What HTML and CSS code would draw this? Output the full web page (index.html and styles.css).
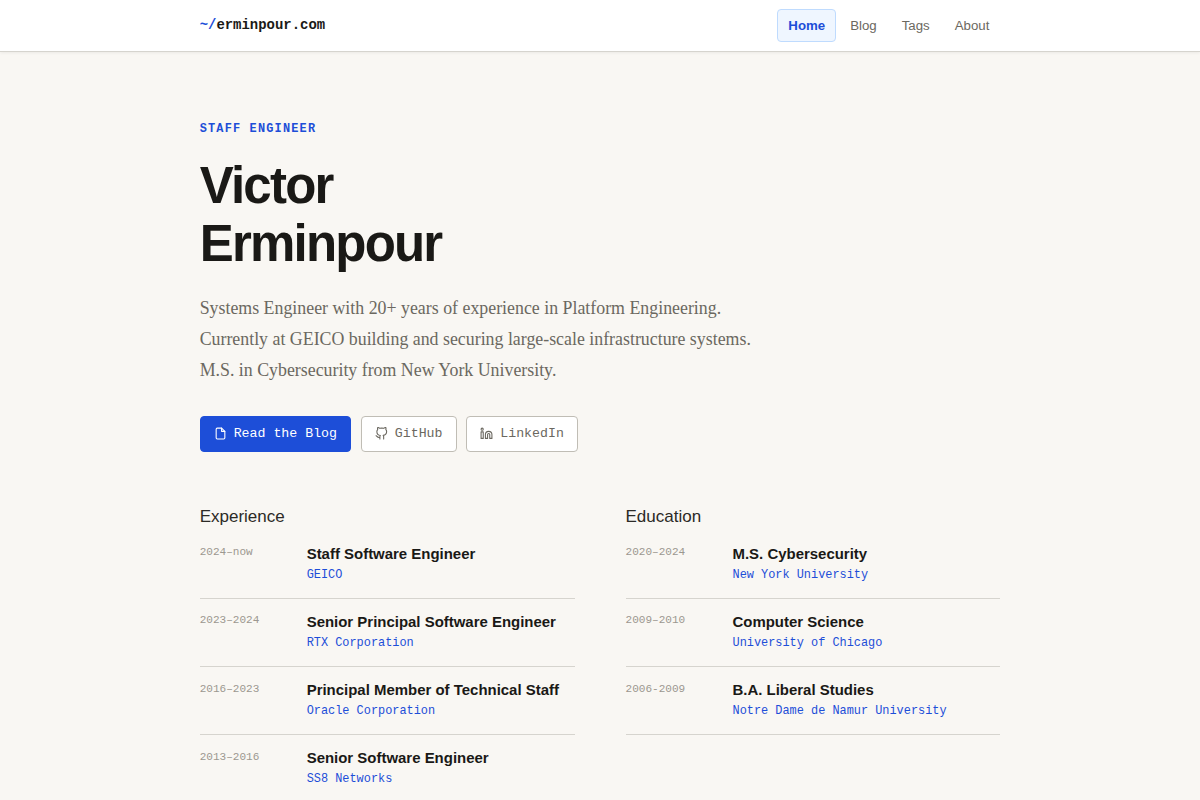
FILE: index.html
```html
<!DOCTYPE html>
<html lang="en">
<head>
  <meta charset="UTF-8" />
  <meta name="viewport" content="width=device-width, initial-scale=1.0"/>
  <title>Victor Erminpour</title>
  <link rel="stylesheet" href="styles.css">
</head>
<body>
  <header class="site-header">
    <div class="container header-inner">
      <a class="logo" href="#"><span class="logo-prefix">~/</span>erminpour.com</a>
      <nav class="nav">
        <a class="nav-link active" href="#">Home</a>
        <a class="nav-link" href="#">Blog</a>
        <a class="nav-link" href="#">Tags</a>
        <a class="nav-link" href="#">About</a>
      </nav>
    </div>
  </header>

  <main class="container">
    <section class="hero">
      <p class="eyebrow">Staff Engineer</p>
      <h1>Victor<br>Erminpour</h1>
      <p class="lead">Systems Engineer with 20+ years of experience in Platform Engineering. Currently at GEICO building and securing large-scale infrastructure systems. M.S. in Cybersecurity from New York University.</p>
      <div class="actions">
        <a class="btn btn-primary" href="#">
          <svg class="icon" viewBox="0 0 24 24"><path d="M14 2H6a2 2 0 0 0-2 2v16a2 2 0 0 0 2 2h12a2 2 0 0 0 2-2V8z"/><polyline points="14 2 14 8 20 8"/></svg>
          Read the Blog
        </a>
        <a class="btn" href="#">
          <svg class="icon" viewBox="0 0 24 24"><path d="M9 19c-5 1.5-5-2.5-7-3m14 6v-3.87a3.37 3.37 0 0 0-.94-2.61c3.14-.35 6.44-1.54 6.44-7A5.44 5.44 0 0 0 20 4.77 5.07 5.07 0 0 0 19.91 1S18.73.65 16 2.48a13.38 13.38 0 0 0-7 0C6.27.65 5.09 1 5.09 1A5.07 5.07 0 0 0 5 4.77a5.44 5.44 0 0 0-1.5 3.78c0 5.42 3.3 6.61 6.44 7A3.37 3.37 0 0 0 9 18.13V22"/></svg>
          GitHub
        </a>
        <a class="btn" href="#">
          <svg class="icon" viewBox="0 0 24 24"><path d="M16 8a6 6 0 0 1 6 6v7h-4v-7a2 2 0 0 0-4 0v7h-4v-7a6 6 0 0 1 6-6z"/><rect x="2" y="9" width="4" height="12"/><circle cx="4" cy="4" r="2"/></svg>
          LinkedIn
        </a>
      </div>
    </section>

    <div class="columns">
      <section>
        <h2>Experience</h2>
        <ul class="timeline">
          <li class="entry">
            <span class="date">2024–now</span>
            <div><div class="title">Staff Software Engineer</div><div class="org">GEICO</div></div>
          </li>
          <li class="entry">
            <span class="date">2023–2024</span>
            <div><div class="title">Senior Principal Software Engineer</div><div class="org">RTX Corporation</div></div>
          </li>
          <li class="entry">
            <span class="date">2016–2023</span>
            <div><div class="title">Principal Member of Technical Staff</div><div class="org">Oracle Corporation</div></div>
          </li>
          <li class="entry">
            <span class="date">2013–2016</span>
            <div><div class="title">Senior Software Engineer</div><div class="org">SS8 Networks</div></div>
          </li>
        </ul>
      </section>

      <section>
        <h2>Education</h2>
        <ul class="timeline">
          <li class="entry">
            <span class="date">2020–2024</span>
            <div><div class="title">M.S. Cybersecurity</div><div class="org">New York University</div></div>
          </li>
          <li class="entry">
            <span class="date">2009–2010</span>
            <div><div class="title">Computer Science</div><div class="org">University of Chicago</div></div>
          </li>
          <li class="entry">
            <span class="date">2006-2009</span>
            <div><div class="title">B.A. Liberal Studies</div><div class="org">Notre Dame de Namur University</div></div>
          </li>
        </ul>
      </section>
    </div>
  </main>
</body>
</html>
```
FILE: styles.css
```css
* {
  box-sizing: border-box;
  margin: 0;
  padding: 0;
}

body {
  font-family: 'Liberation Sans', Arial, sans-serif;
  background: #f9f7f3;
  color: #1a1916;
  height: 100vh;
  overflow: hidden;
}

a {
  color: inherit;
  text-decoration: none;
}

.container {
  width: 800.7px;
  margin: 0 auto;
}

.site-header {
  height: 52px;
  background: #fff;
  border-bottom: 1px solid #d6d4ce;
  box-shadow: 0 1px 3px rgba(0, 0, 0, 0.06);
}

.header-inner {
  display: flex;
  justify-content: space-between;
  align-items: center;
  height: 51px;
}

.logo {
  font: bold 13.94px/20px 'Liberation Mono', monospace;
  padding-bottom: 2px;
}

.logo-prefix {
  color: #1d4ed8;
}

.nav {
  display: flex;
  gap: 3px;
}

.nav-link {
  padding: 0 10px;
  border: 1px solid transparent;
  border-radius: 4px;
  font-size: 13.26px;
  line-height: 31px;
  color: #6b6860;
}

.nav-link.active {
  background: #eff6ff;
  border-color: #bfdbfe;
  color: #1d4ed8;
  font-weight: bold;
}

.hero {
  padding-top: 69px;
}

.eyebrow {
  font: bold 11.9px/16px 'Liberation Mono', monospace;
  letter-spacing: 0.1em;
  text-transform: uppercase;
  color: #1d4ed8;
  margin-bottom: 20px;
}

h1 {
  font-size: 51px;
  line-height: 58px;
  letter-spacing: -0.035em;
  margin-bottom: 20px;
}

.lead {
  font: 17.85px/31px 'Liberation Serif', serif;
  color: #6b6860;
  width: 560px;
  margin-bottom: 30px;
}

.actions {
  display: flex;
  gap: 9.6px;
  margin-bottom: 54px;
}

.btn {
  display: flex;
  align-items: center;
  gap: 6.8px;
  height: 36px;
  padding: 0 13.2px 2px;
  border: 1px solid #c0bdb5;
  border-radius: 4px;
  background: #fff;
  color: #6b6860;
  font: 13.26px 'Liberation Mono', monospace;
}

.btn-primary {
  background: #1d4ed8;
  border-color: #1d4ed8;
  color: #fff;
}

.icon {
  width: 13px;
  height: 13px;
  fill: none;
  stroke: currentColor;
  stroke-width: 2;
  stroke-linecap: round;
  stroke-linejoin: round;
}

.columns {
  display: grid;
  grid-template-columns: 1fr 1fr;
  gap: 51px;
}

h2 {
  font-size: 17px;
  font-weight: normal;
  line-height: 22px;
  color: #2c2a26;
  margin-bottom: 3px;
}

.timeline {
  list-style: none;
}

.entry {
  display: grid;
  grid-template-columns: 88px 1fr;
  gap: 19px;
  height: 68.1px;
  padding-top: 13px;
  border-bottom: 1px solid #d6d4ce;
}

.date {
  font: 11.05px/16px 'Liberation Mono', monospace;
  color: #9c9890;
  padding-top: 0.35px;
}

.title {
  font-size: 14.96px;
  font-weight: bold;
  line-height: 20px;
  margin-bottom: 1px;
}

.org {
  font: 11.9px/20px 'Liberation Mono', monospace;
  color: #1d4ed8;
}
```
